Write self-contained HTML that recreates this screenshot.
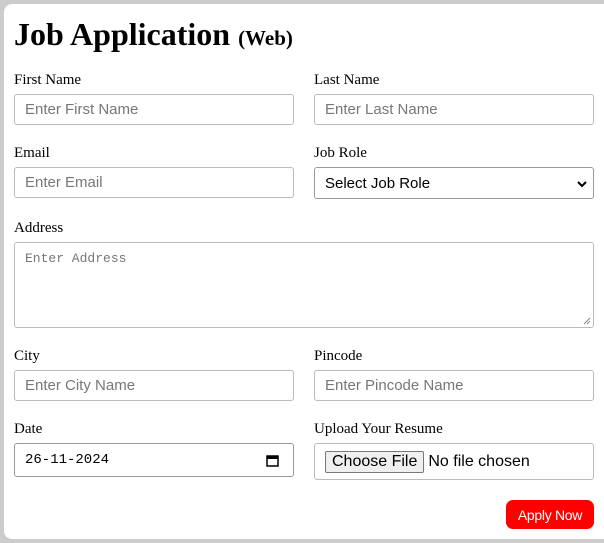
<!DOCTYPE html>
<html><head><style>
body{margin:0;background:#ccc;width:604px;height:543px;overflow:hidden;position:relative;font-family:"Liberation Serif",serif}
.card{position:absolute;left:4px;top:4px;width:610px;height:535px;background:#fff;border-radius:8px}
.a{position:absolute}
h1{position:absolute;left:14px;top:14px;margin:0;font-size:32px;font-weight:bold;line-height:40px}
h1 small{font-size:21px}
.l{position:absolute;font-size:15px;line-height:18px;color:#000}
.i{position:absolute;box-sizing:border-box;border:1px solid #bbb;border-radius:3px;background:#fff;font-family:"Liberation Sans",sans-serif;font-size:15px;color:#777;padding-left:10px;display:flex;align-items:center}
.btn{position:absolute;left:506px;top:500px;width:88px;height:29px;background:#f00;color:#fff;border-radius:7px;font-family:"Liberation Sans",sans-serif;font-size:14px;display:flex;align-items:center;justify-content:center;letter-spacing:-0.3px}
</style></head><body>
<div class="card"></div>
<h1>Job Application <small>(Web)</small></h1>
<div class="l" style="left:14px;top:71px">First Name</div>
<div class="l" style="left:314px;top:71px">Last Name</div>
<div class="i" style="left:14px;top:94px;width:280px;height:31px">Enter First Name</div>
<div class="i" style="left:314px;top:94px;width:280px;height:31px">Enter Last Name</div>
<div class="l" style="left:14px;top:144px">Email</div>
<div class="l" style="left:314px;top:144px">Job Role</div>
<div class="i" style="left:14px;top:167px;width:280px;height:31px">Enter Email</div>
<div class="i" style="left:314px;top:167px;width:280px;height:32px;color:#000;border-color:#999">Select Job Role
<svg class="a" style="right:6px;top:12px" width="10" height="8" viewBox="0 0 10 8"><path d="M1 2l4 4 4-4" stroke="#000" stroke-width="2" fill="none"/></svg></div>
<div class="l" style="left:14px;top:219px">Address</div>
<div class="i" style="left:14px;top:242px;width:580px;height:86px;align-items:flex-start;padding-top:8px;font-family:'Liberation Mono',monospace;font-size:13px">Enter Address
<svg class="a" style="right:2px;bottom:2px" width="8" height="8" viewBox="0 0 8 8"><path d="M7 1L1 7M7 4L4 7" stroke="#888" stroke-width="1"/></svg></div>
<div class="l" style="left:14px;top:347px">City</div>
<div class="l" style="left:314px;top:347px">Pincode</div>
<div class="i" style="left:14px;top:370px;width:280px;height:31px">Enter City Name</div>
<div class="i" style="left:314px;top:370px;width:280px;height:31px">Enter Pincode Name</div>
<div class="l" style="left:14px;top:420px">Date</div>
<div class="l" style="left:314px;top:420px">Upload Your Resume</div>
<div class="i" style="left:14px;top:443px;width:280px;height:34px;color:#000;font-family:'Liberation Mono',monospace;font-size:14px;border-color:#999">26-11-2024
<svg class="a" style="right:14px;top:10px" width="13" height="13" viewBox="0 0 13 13"><rect x="1" y="2" width="11" height="10" fill="none" stroke="#000" stroke-width="1.5"/><rect x="1" y="2" width="11" height="3" fill="#000"/></svg></div>
<div class="i" style="left:314px;top:443px;width:280px;height:37px;color:#000;font-size:16px">
<span style="border:1px solid #777;background:#efefef;border-radius:2px;padding:1px 6px;margin-right:4px">Choose File</span>No file chosen</div>
<div class="btn">Apply Now</div>
</body></html>
